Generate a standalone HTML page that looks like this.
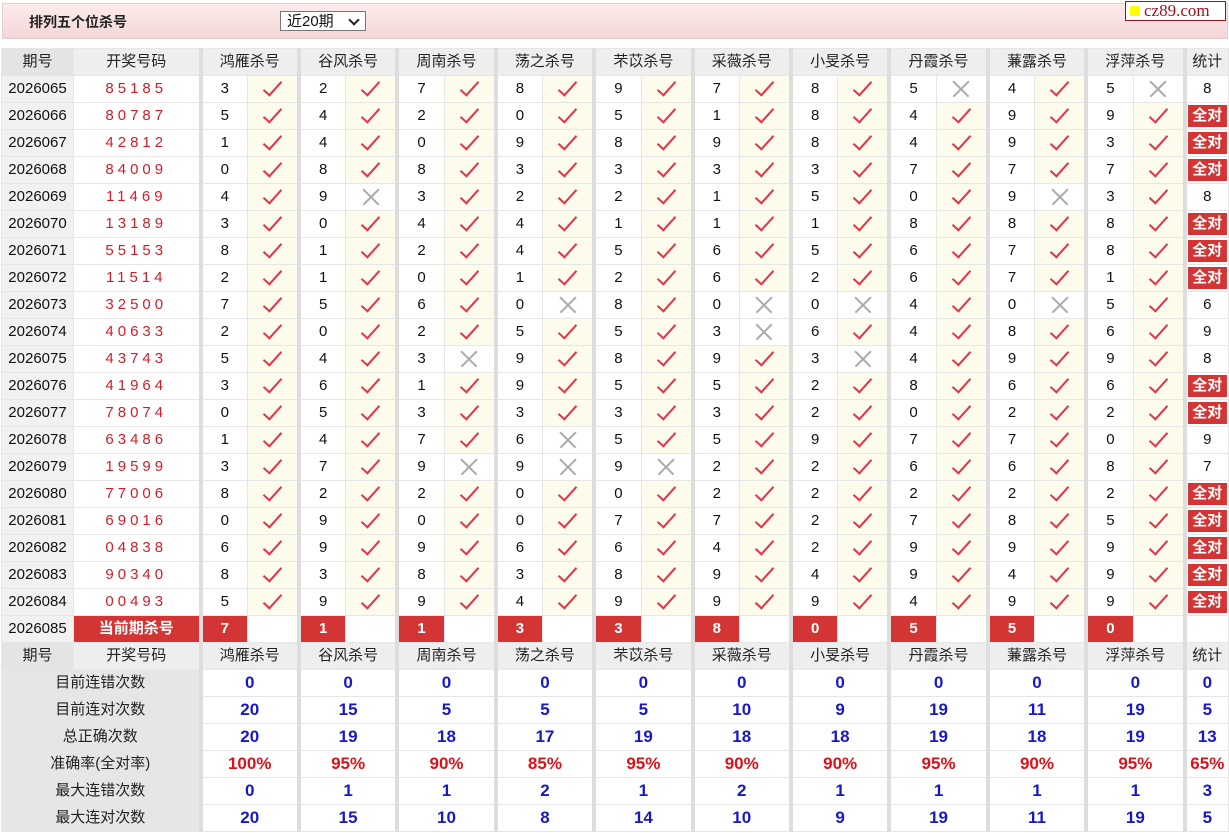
<!DOCTYPE html>
<html><head><meta charset="utf-8"><style>
body{margin:0;background:#fff;font-family:"Liberation Sans","Noto Sans CJK SC",sans-serif;width:1229px;height:833px;overflow:hidden;position:relative}
.hd{position:absolute;left:2px;top:3px;width:1224px;height:34px;background:linear-gradient(#fcecec,#f5d6d8);border:1px solid #e2cfcf}
.tt{position:absolute;left:26px;top:8px;font-size:14px;font-weight:bold;color:#222}
.sel{position:absolute;left:277px;top:7px;width:86px;height:20px;border:1px solid #777;background:#fff;font-size:15px;line-height:20px;padding-left:6px;box-sizing:border-box;color:#111}
.sel b{position:absolute;right:7px;top:4px;width:6px;height:6px;border-right:2px solid #222;border-bottom:2px solid #222;transform:rotate(45deg)}
.logo{position:absolute;left:1125px;top:1px;width:99px;height:18px;border:1px solid #a01020;background:#fff;font-family:"Liberation Serif",serif;color:#a01020;font-size:17px;line-height:18px}
.logo i{display:inline-block;width:10px;height:10px;background:#ff0;margin:0 4px 0 4px}
table{position:absolute;left:1px;top:48px;border-collapse:collapse;table-layout:fixed;width:1227px;font-size:15px}
tr{height:27px}
td{height:26px;line-height:24px;border:1px solid #e6e6e6;text-align:center;padding:0;color:#111;white-space:nowrap;overflow:hidden;box-sizing:border-box}
.g{border-left:4px solid #ddd}
tr.h td{background:#eeeeee;color:#222}
td.p{background:#f1f1f1}
tr.h td.p{background:#e4e4e4}
td.n{color:#d41c28;letter-spacing:4px}
td.y{background:#fdfbeb}
.c{display:inline-block;width:7px;height:17px;border-right:2.5px solid #e23446;border-bottom:2.5px solid #e23446;transform:rotate(42deg);margin-top:-5px;vertical-align:middle}
.x{display:inline-block;width:18px;height:18px;position:relative;vertical-align:middle}
.x:before,.x:after{content:"";position:absolute;left:-2px;top:8px;width:22px;height:1.5px;background:#aaa;transform:rotate(45deg)}
.x:after{transform:rotate(-45deg)}
td.r{background:#d33434;color:#fff;font-weight:bold}
td.a{padding:1px}
td.a span{display:block;background:#d33434;color:#fff;font-weight:bold;height:22px;line-height:22px;font-size:15px}
td.l{background:#e6e6e6;color:#222}
td.v{color:#1818c8;font-weight:bold;font-size:17px}
td.q{color:#e0101a;font-weight:bold;font-size:17px}
</style></head><body>
<div class="hd"><div class="tt">排列五个位杀号</div><div class="sel">近20期<b></b></div></div>
<div class="logo"><i></i>cz89.com</div>
<table>
<colgroup><col style="width:72px"><col style="width:127px"><col style="width:47px"><col style="width:51.4px"><col style="width:47px"><col style="width:51.4px"><col style="width:47px"><col style="width:51.4px"><col style="width:47px"><col style="width:51.4px"><col style="width:47px"><col style="width:51.4px"><col style="width:47px"><col style="width:51.4px"><col style="width:47px"><col style="width:51.4px"><col style="width:47px"><col style="width:51.4px"><col style="width:47px"><col style="width:51.4px"><col style="width:47px"><col style="width:51.4px"><col style="width:44px"></colgroup>
<tr class="h"><td class="p">期号</td><td>开奖号码</td><td class="g" colspan="2">鸿雁杀号</td><td class="g" colspan="2">谷风杀号</td><td class="g" colspan="2">周南杀号</td><td class="g" colspan="2">荡之杀号</td><td class="g" colspan="2">芣苡杀号</td><td class="g" colspan="2">采薇杀号</td><td class="g" colspan="2">小旻杀号</td><td class="g" colspan="2">丹霞杀号</td><td class="g" colspan="2">蒹露杀号</td><td class="g" colspan="2">浮萍杀号</td><td class="g">统计</td></tr>
<tr><td class="p">2026065</td><td class="n">85185</td><td class="g">3</td><td class="y"><i class="c"></i></td><td class="g">2</td><td class="y"><i class="c"></i></td><td class="g">7</td><td class="y"><i class="c"></i></td><td class="g">8</td><td class="y"><i class="c"></i></td><td class="g">9</td><td class="y"><i class="c"></i></td><td class="g">7</td><td class="y"><i class="c"></i></td><td class="g">8</td><td class="y"><i class="c"></i></td><td class="g">5</td><td><i class="x"></i></td><td class="g">4</td><td class="y"><i class="c"></i></td><td class="g">5</td><td><i class="x"></i></td><td class="g">8</td></tr>
<tr><td class="p">2026066</td><td class="n">80787</td><td class="g">5</td><td class="y"><i class="c"></i></td><td class="g">4</td><td class="y"><i class="c"></i></td><td class="g">2</td><td class="y"><i class="c"></i></td><td class="g">0</td><td class="y"><i class="c"></i></td><td class="g">5</td><td class="y"><i class="c"></i></td><td class="g">1</td><td class="y"><i class="c"></i></td><td class="g">8</td><td class="y"><i class="c"></i></td><td class="g">4</td><td class="y"><i class="c"></i></td><td class="g">9</td><td class="y"><i class="c"></i></td><td class="g">9</td><td class="y"><i class="c"></i></td><td class="g a"><span>全对</span></td></tr>
<tr><td class="p">2026067</td><td class="n">42812</td><td class="g">1</td><td class="y"><i class="c"></i></td><td class="g">4</td><td class="y"><i class="c"></i></td><td class="g">0</td><td class="y"><i class="c"></i></td><td class="g">9</td><td class="y"><i class="c"></i></td><td class="g">8</td><td class="y"><i class="c"></i></td><td class="g">9</td><td class="y"><i class="c"></i></td><td class="g">8</td><td class="y"><i class="c"></i></td><td class="g">4</td><td class="y"><i class="c"></i></td><td class="g">9</td><td class="y"><i class="c"></i></td><td class="g">3</td><td class="y"><i class="c"></i></td><td class="g a"><span>全对</span></td></tr>
<tr><td class="p">2026068</td><td class="n">84009</td><td class="g">0</td><td class="y"><i class="c"></i></td><td class="g">8</td><td class="y"><i class="c"></i></td><td class="g">8</td><td class="y"><i class="c"></i></td><td class="g">3</td><td class="y"><i class="c"></i></td><td class="g">3</td><td class="y"><i class="c"></i></td><td class="g">3</td><td class="y"><i class="c"></i></td><td class="g">3</td><td class="y"><i class="c"></i></td><td class="g">7</td><td class="y"><i class="c"></i></td><td class="g">7</td><td class="y"><i class="c"></i></td><td class="g">7</td><td class="y"><i class="c"></i></td><td class="g a"><span>全对</span></td></tr>
<tr><td class="p">2026069</td><td class="n">11469</td><td class="g">4</td><td class="y"><i class="c"></i></td><td class="g">9</td><td><i class="x"></i></td><td class="g">3</td><td class="y"><i class="c"></i></td><td class="g">2</td><td class="y"><i class="c"></i></td><td class="g">2</td><td class="y"><i class="c"></i></td><td class="g">1</td><td class="y"><i class="c"></i></td><td class="g">5</td><td class="y"><i class="c"></i></td><td class="g">0</td><td class="y"><i class="c"></i></td><td class="g">9</td><td><i class="x"></i></td><td class="g">3</td><td class="y"><i class="c"></i></td><td class="g">8</td></tr>
<tr><td class="p">2026070</td><td class="n">13189</td><td class="g">3</td><td class="y"><i class="c"></i></td><td class="g">0</td><td class="y"><i class="c"></i></td><td class="g">4</td><td class="y"><i class="c"></i></td><td class="g">4</td><td class="y"><i class="c"></i></td><td class="g">1</td><td class="y"><i class="c"></i></td><td class="g">1</td><td class="y"><i class="c"></i></td><td class="g">1</td><td class="y"><i class="c"></i></td><td class="g">8</td><td class="y"><i class="c"></i></td><td class="g">8</td><td class="y"><i class="c"></i></td><td class="g">8</td><td class="y"><i class="c"></i></td><td class="g a"><span>全对</span></td></tr>
<tr><td class="p">2026071</td><td class="n">55153</td><td class="g">8</td><td class="y"><i class="c"></i></td><td class="g">1</td><td class="y"><i class="c"></i></td><td class="g">2</td><td class="y"><i class="c"></i></td><td class="g">4</td><td class="y"><i class="c"></i></td><td class="g">5</td><td class="y"><i class="c"></i></td><td class="g">6</td><td class="y"><i class="c"></i></td><td class="g">5</td><td class="y"><i class="c"></i></td><td class="g">6</td><td class="y"><i class="c"></i></td><td class="g">7</td><td class="y"><i class="c"></i></td><td class="g">8</td><td class="y"><i class="c"></i></td><td class="g a"><span>全对</span></td></tr>
<tr><td class="p">2026072</td><td class="n">11514</td><td class="g">2</td><td class="y"><i class="c"></i></td><td class="g">1</td><td class="y"><i class="c"></i></td><td class="g">0</td><td class="y"><i class="c"></i></td><td class="g">1</td><td class="y"><i class="c"></i></td><td class="g">2</td><td class="y"><i class="c"></i></td><td class="g">6</td><td class="y"><i class="c"></i></td><td class="g">2</td><td class="y"><i class="c"></i></td><td class="g">6</td><td class="y"><i class="c"></i></td><td class="g">7</td><td class="y"><i class="c"></i></td><td class="g">1</td><td class="y"><i class="c"></i></td><td class="g a"><span>全对</span></td></tr>
<tr><td class="p">2026073</td><td class="n">32500</td><td class="g">7</td><td class="y"><i class="c"></i></td><td class="g">5</td><td class="y"><i class="c"></i></td><td class="g">6</td><td class="y"><i class="c"></i></td><td class="g">0</td><td><i class="x"></i></td><td class="g">8</td><td class="y"><i class="c"></i></td><td class="g">0</td><td><i class="x"></i></td><td class="g">0</td><td><i class="x"></i></td><td class="g">4</td><td class="y"><i class="c"></i></td><td class="g">0</td><td><i class="x"></i></td><td class="g">5</td><td class="y"><i class="c"></i></td><td class="g">6</td></tr>
<tr><td class="p">2026074</td><td class="n">40633</td><td class="g">2</td><td class="y"><i class="c"></i></td><td class="g">0</td><td class="y"><i class="c"></i></td><td class="g">2</td><td class="y"><i class="c"></i></td><td class="g">5</td><td class="y"><i class="c"></i></td><td class="g">5</td><td class="y"><i class="c"></i></td><td class="g">3</td><td><i class="x"></i></td><td class="g">6</td><td class="y"><i class="c"></i></td><td class="g">4</td><td class="y"><i class="c"></i></td><td class="g">8</td><td class="y"><i class="c"></i></td><td class="g">6</td><td class="y"><i class="c"></i></td><td class="g">9</td></tr>
<tr><td class="p">2026075</td><td class="n">43743</td><td class="g">5</td><td class="y"><i class="c"></i></td><td class="g">4</td><td class="y"><i class="c"></i></td><td class="g">3</td><td><i class="x"></i></td><td class="g">9</td><td class="y"><i class="c"></i></td><td class="g">8</td><td class="y"><i class="c"></i></td><td class="g">9</td><td class="y"><i class="c"></i></td><td class="g">3</td><td><i class="x"></i></td><td class="g">4</td><td class="y"><i class="c"></i></td><td class="g">9</td><td class="y"><i class="c"></i></td><td class="g">9</td><td class="y"><i class="c"></i></td><td class="g">8</td></tr>
<tr><td class="p">2026076</td><td class="n">41964</td><td class="g">3</td><td class="y"><i class="c"></i></td><td class="g">6</td><td class="y"><i class="c"></i></td><td class="g">1</td><td class="y"><i class="c"></i></td><td class="g">9</td><td class="y"><i class="c"></i></td><td class="g">5</td><td class="y"><i class="c"></i></td><td class="g">5</td><td class="y"><i class="c"></i></td><td class="g">2</td><td class="y"><i class="c"></i></td><td class="g">8</td><td class="y"><i class="c"></i></td><td class="g">6</td><td class="y"><i class="c"></i></td><td class="g">6</td><td class="y"><i class="c"></i></td><td class="g a"><span>全对</span></td></tr>
<tr><td class="p">2026077</td><td class="n">78074</td><td class="g">0</td><td class="y"><i class="c"></i></td><td class="g">5</td><td class="y"><i class="c"></i></td><td class="g">3</td><td class="y"><i class="c"></i></td><td class="g">3</td><td class="y"><i class="c"></i></td><td class="g">3</td><td class="y"><i class="c"></i></td><td class="g">3</td><td class="y"><i class="c"></i></td><td class="g">2</td><td class="y"><i class="c"></i></td><td class="g">0</td><td class="y"><i class="c"></i></td><td class="g">2</td><td class="y"><i class="c"></i></td><td class="g">2</td><td class="y"><i class="c"></i></td><td class="g a"><span>全对</span></td></tr>
<tr><td class="p">2026078</td><td class="n">63486</td><td class="g">1</td><td class="y"><i class="c"></i></td><td class="g">4</td><td class="y"><i class="c"></i></td><td class="g">7</td><td class="y"><i class="c"></i></td><td class="g">6</td><td><i class="x"></i></td><td class="g">5</td><td class="y"><i class="c"></i></td><td class="g">5</td><td class="y"><i class="c"></i></td><td class="g">9</td><td class="y"><i class="c"></i></td><td class="g">7</td><td class="y"><i class="c"></i></td><td class="g">7</td><td class="y"><i class="c"></i></td><td class="g">0</td><td class="y"><i class="c"></i></td><td class="g">9</td></tr>
<tr><td class="p">2026079</td><td class="n">19599</td><td class="g">3</td><td class="y"><i class="c"></i></td><td class="g">7</td><td class="y"><i class="c"></i></td><td class="g">9</td><td><i class="x"></i></td><td class="g">9</td><td><i class="x"></i></td><td class="g">9</td><td><i class="x"></i></td><td class="g">2</td><td class="y"><i class="c"></i></td><td class="g">2</td><td class="y"><i class="c"></i></td><td class="g">6</td><td class="y"><i class="c"></i></td><td class="g">6</td><td class="y"><i class="c"></i></td><td class="g">8</td><td class="y"><i class="c"></i></td><td class="g">7</td></tr>
<tr><td class="p">2026080</td><td class="n">77006</td><td class="g">8</td><td class="y"><i class="c"></i></td><td class="g">2</td><td class="y"><i class="c"></i></td><td class="g">2</td><td class="y"><i class="c"></i></td><td class="g">0</td><td class="y"><i class="c"></i></td><td class="g">0</td><td class="y"><i class="c"></i></td><td class="g">2</td><td class="y"><i class="c"></i></td><td class="g">2</td><td class="y"><i class="c"></i></td><td class="g">2</td><td class="y"><i class="c"></i></td><td class="g">2</td><td class="y"><i class="c"></i></td><td class="g">2</td><td class="y"><i class="c"></i></td><td class="g a"><span>全对</span></td></tr>
<tr><td class="p">2026081</td><td class="n">69016</td><td class="g">0</td><td class="y"><i class="c"></i></td><td class="g">9</td><td class="y"><i class="c"></i></td><td class="g">0</td><td class="y"><i class="c"></i></td><td class="g">0</td><td class="y"><i class="c"></i></td><td class="g">7</td><td class="y"><i class="c"></i></td><td class="g">7</td><td class="y"><i class="c"></i></td><td class="g">2</td><td class="y"><i class="c"></i></td><td class="g">7</td><td class="y"><i class="c"></i></td><td class="g">8</td><td class="y"><i class="c"></i></td><td class="g">5</td><td class="y"><i class="c"></i></td><td class="g a"><span>全对</span></td></tr>
<tr><td class="p">2026082</td><td class="n">04838</td><td class="g">6</td><td class="y"><i class="c"></i></td><td class="g">9</td><td class="y"><i class="c"></i></td><td class="g">9</td><td class="y"><i class="c"></i></td><td class="g">6</td><td class="y"><i class="c"></i></td><td class="g">6</td><td class="y"><i class="c"></i></td><td class="g">4</td><td class="y"><i class="c"></i></td><td class="g">2</td><td class="y"><i class="c"></i></td><td class="g">9</td><td class="y"><i class="c"></i></td><td class="g">9</td><td class="y"><i class="c"></i></td><td class="g">9</td><td class="y"><i class="c"></i></td><td class="g a"><span>全对</span></td></tr>
<tr><td class="p">2026083</td><td class="n">90340</td><td class="g">8</td><td class="y"><i class="c"></i></td><td class="g">3</td><td class="y"><i class="c"></i></td><td class="g">8</td><td class="y"><i class="c"></i></td><td class="g">3</td><td class="y"><i class="c"></i></td><td class="g">8</td><td class="y"><i class="c"></i></td><td class="g">9</td><td class="y"><i class="c"></i></td><td class="g">4</td><td class="y"><i class="c"></i></td><td class="g">9</td><td class="y"><i class="c"></i></td><td class="g">4</td><td class="y"><i class="c"></i></td><td class="g">9</td><td class="y"><i class="c"></i></td><td class="g a"><span>全对</span></td></tr>
<tr><td class="p">2026084</td><td class="n">00493</td><td class="g">5</td><td class="y"><i class="c"></i></td><td class="g">9</td><td class="y"><i class="c"></i></td><td class="g">9</td><td class="y"><i class="c"></i></td><td class="g">4</td><td class="y"><i class="c"></i></td><td class="g">9</td><td class="y"><i class="c"></i></td><td class="g">9</td><td class="y"><i class="c"></i></td><td class="g">9</td><td class="y"><i class="c"></i></td><td class="g">4</td><td class="y"><i class="c"></i></td><td class="g">9</td><td class="y"><i class="c"></i></td><td class="g">9</td><td class="y"><i class="c"></i></td><td class="g a"><span>全对</span></td></tr>
<tr><td class="p">2026085</td><td class="r">当前期杀号</td><td class="g r">7</td><td></td><td class="g r">1</td><td></td><td class="g r">1</td><td></td><td class="g r">3</td><td></td><td class="g r">3</td><td></td><td class="g r">8</td><td></td><td class="g r">0</td><td></td><td class="g r">5</td><td></td><td class="g r">5</td><td></td><td class="g r">0</td><td></td><td class="g"></td></tr>
<tr class="h"><td class="p">期号</td><td>开奖号码</td><td class="g" colspan="2">鸿雁杀号</td><td class="g" colspan="2">谷风杀号</td><td class="g" colspan="2">周南杀号</td><td class="g" colspan="2">荡之杀号</td><td class="g" colspan="2">芣苡杀号</td><td class="g" colspan="2">采薇杀号</td><td class="g" colspan="2">小旻杀号</td><td class="g" colspan="2">丹霞杀号</td><td class="g" colspan="2">蒹露杀号</td><td class="g" colspan="2">浮萍杀号</td><td class="g">统计</td></tr>
<tr><td class="l" colspan="2">目前连错次数</td><td class="g v" colspan="2">0</td><td class="g v" colspan="2">0</td><td class="g v" colspan="2">0</td><td class="g v" colspan="2">0</td><td class="g v" colspan="2">0</td><td class="g v" colspan="2">0</td><td class="g v" colspan="2">0</td><td class="g v" colspan="2">0</td><td class="g v" colspan="2">0</td><td class="g v" colspan="2">0</td><td class="g v">0</td></tr>
<tr><td class="l" colspan="2">目前连对次数</td><td class="g v" colspan="2">20</td><td class="g v" colspan="2">15</td><td class="g v" colspan="2">5</td><td class="g v" colspan="2">5</td><td class="g v" colspan="2">5</td><td class="g v" colspan="2">10</td><td class="g v" colspan="2">9</td><td class="g v" colspan="2">19</td><td class="g v" colspan="2">11</td><td class="g v" colspan="2">19</td><td class="g v">5</td></tr>
<tr><td class="l" colspan="2">总正确次数</td><td class="g v" colspan="2">20</td><td class="g v" colspan="2">19</td><td class="g v" colspan="2">18</td><td class="g v" colspan="2">17</td><td class="g v" colspan="2">19</td><td class="g v" colspan="2">18</td><td class="g v" colspan="2">18</td><td class="g v" colspan="2">19</td><td class="g v" colspan="2">18</td><td class="g v" colspan="2">19</td><td class="g v">13</td></tr>
<tr><td class="l" colspan="2">准确率(全对率)</td><td class="g q" colspan="2">100%</td><td class="g q" colspan="2">95%</td><td class="g q" colspan="2">90%</td><td class="g q" colspan="2">85%</td><td class="g q" colspan="2">95%</td><td class="g q" colspan="2">90%</td><td class="g q" colspan="2">90%</td><td class="g q" colspan="2">95%</td><td class="g q" colspan="2">90%</td><td class="g q" colspan="2">95%</td><td class="g q">65%</td></tr>
<tr><td class="l" colspan="2">最大连错次数</td><td class="g v" colspan="2">0</td><td class="g v" colspan="2">1</td><td class="g v" colspan="2">1</td><td class="g v" colspan="2">2</td><td class="g v" colspan="2">1</td><td class="g v" colspan="2">2</td><td class="g v" colspan="2">1</td><td class="g v" colspan="2">1</td><td class="g v" colspan="2">1</td><td class="g v" colspan="2">1</td><td class="g v">3</td></tr>
<tr><td class="l" colspan="2">最大连对次数</td><td class="g v" colspan="2">20</td><td class="g v" colspan="2">15</td><td class="g v" colspan="2">10</td><td class="g v" colspan="2">8</td><td class="g v" colspan="2">14</td><td class="g v" colspan="2">10</td><td class="g v" colspan="2">9</td><td class="g v" colspan="2">19</td><td class="g v" colspan="2">11</td><td class="g v" colspan="2">19</td><td class="g v">5</td></tr>
</table>
</body></html>
